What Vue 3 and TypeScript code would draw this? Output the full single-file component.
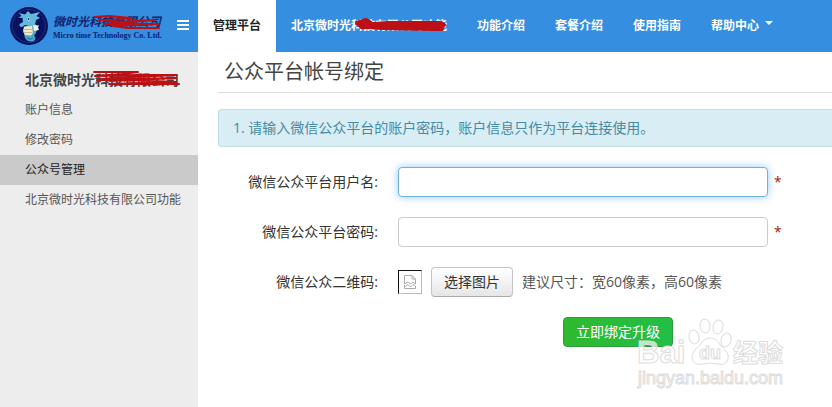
<script setup lang="ts">
import { ref } from 'vue'

interface NavItem {
  label: string
  active?: boolean
  struck?: boolean
  menu?: boolean
}

const navItems: NavItem[] = [
  { label: '管理平台', active: true },
  { label: '北京微时光科技有限公司功能', struck: true },
  { label: '功能介绍' },
  { label: '套餐介绍' },
  { label: '使用指南' },
  { label: '帮助中心', menu: true },
]

const sideItems: NavItem[] = [
  { label: '账户信息' },
  { label: '修改密码' },
  { label: '公众号管理', active: true },
  { label: '北京微时光科技有限公司功能' },
]

const username = ref('')
const password = ref('')
</script>

<template>
  <div class="page">
    <header class="topbar">
      <div class="brand">
        <svg class="emblem" viewBox="0 0 40 40" aria-hidden="true">
          <circle cx="20" cy="20" r="19" fill="#08125e" />
          <circle cx="20" cy="20" r="16.5" fill="none" stroke="#28458f" stroke-width="0.6" />
          <path d="M17 20 Q14 27 16 32 Q19 37 25 35 Q28 32 25 30 Q30 24 26 17Z" fill="#4aa5cf" />
          <path d="M10 7 L16 8.500 L19 5 L22 8 L31 6 L27.500 10 L31 12 L27 14 Q27 19 22 20 L16 19 L13 21 Q10 21 10.500 18 L14 16 L13.500 12 L9 11.500 L12.500 10Z" fill="#62b9dc" />
          <path d="M15 20.500 L23 20 L24 27 L22 29.500 L16 29 L14 25Z" fill="#eee9c9" />
          <path d="M14.500 23.500H23.500M14.500 26.500H23.500" stroke="#b5af91" stroke-width="0.8" />
          <path d="M24 19 L30 19.500 L29 21.500 L30 24 L25 25Z" fill="#f3f5ec" />
          <path d="M18 32 Q21 34.500 24 32" fill="none" stroke="#246d9a" />
          <circle cx="19.500" cy="13" r="1.500" fill="#fff" />
          <circle cx="19.500" cy="13" r="1" fill="#162453" />
        </svg>
        <div class="brand-text">
          <span class="brand-cn">微时光科技有限公司
            <svg class="scribble scribble-brand" viewBox="0 0 68 18" aria-hidden="true">
              <path d="M2 3 L16 2 L38 4 L20 6 L6 6 L24 8 L62 6 L26 9 L12 10 L66 10 L20 12 L34 14 L66 14" />
            </svg>
          </span>
          <span class="brand-en">Micro time Technology Co. Ltd.</span>
        </div>
        <button class="toggle" type="button" aria-label="菜单">
          <span></span><span></span><span></span>
        </button>
      </div>
      <nav class="nav">
        <a v-for="item in navItems" :key="item.label" href="#" :class="{ active: item.active }">
          {{ item.label }}
          <i v-if="item.menu" class="caret"></i>
          <svg v-if="item.struck" class="scribble scribble-nav" viewBox="0 0 94 18" aria-hidden="true">
            <path d="M4 7 L13 4 L18 7 L6 9 L35 7 L88 7 L91 9 L15 9 L8 11 L75 10 L90 10 L80 13 L30 12 L15 11 L89 13" />
          </svg>
        </a>
      </nav>
    </header>

    <div class="body">
      <aside class="sidebar">
        <h2>北京微时光科技有限公司
          <svg class="scribble scribble-side" viewBox="0 0 90 18" aria-hidden="true">
            <path d="M2 2 H46 L30 4 L3 6 L46 5 L84 5 L20 8 L5 10 L84 8 L18 11 L40 10 L84 12 L17 14 L87 14" />
          </svg>
        </h2>
        <a v-for="item in sideItems" :key="item.label" href="#" :class="{ active: item.active }">{{ item.label }}</a>
      </aside>

      <main class="content">
        <h1>公众平台帐号绑定</h1>
        <p class="notice">1. 请输入微信公众平台的账户密码，账户信息只作为平台连接使用。</p>
        <form class="form" @submit.prevent>
          <div class="row">
            <label for="username">微信公众平台用户名:</label>
            <input id="username" v-model="username" class="current" type="text" autocomplete="off" />
            <span class="required">*</span>
          </div>
          <div class="row">
            <label for="password">微信公众平台密码:</label>
            <input id="password" v-model="password" type="password" autocomplete="off" />
            <span class="required">*</span>
          </div>
          <div class="row">
            <label for="choose">微信公众二维码:</label>
            <span class="preview">
              <svg viewBox="0 0 14 16" aria-hidden="true">
                <path d="M1.500 8 V1.500 H9 L12.500 5 V10 L10 8 L7.500 10 L5 8 L1.500 10Z M9 1.500 V5 H12.500 M1.500 11 V14.500 H12.500 V12 L10 10.500 L7.500 13 L5 10.500 L2.500 12.500" fill="none" stroke="#aaa" />
              </svg>
            </span>
            <button id="choose" class="choose" type="button">选择图片</button>
            <span class="hint">建议尺寸：宽60像素，高60像素</span>
          </div>
          <button class="submit" type="submit">立即绑定升级</button>
        </form>
      </main>
    </div>

    <svg class="watermark" viewBox="0 0 156 84" aria-hidden="true">
      <g fill="#fff" fill-opacity="0.7" stroke="#dcdcdc" stroke-width="1">
        <text x="2" y="46" class="wm-latin">Bai</text>
        <ellipse cx="59" cy="20" rx="5" ry="7" transform="rotate(-12 59 20)" />
        <ellipse cx="70" cy="9" rx="5" ry="7" transform="rotate(-6 70 9)" />
        <ellipse cx="83" cy="10" rx="5" ry="7" transform="rotate(12 83 10)" />
        <ellipse cx="91" cy="23" rx="5" ry="7" transform="rotate(16 91 23)" />
        <path d="M75 21 Q82 21 85 28 Q95 36 93 42 Q91 49 83 47 Q75 45 69 47 Q59 49 57 42 Q56 35 65 28 Q69 21 75 21Z" />
        <text x="64" y="42" class="wm-du">du</text>
        <text x="98" y="45" class="wm-cn">经验</text>
        <text x="3" y="67" class="wm-url">jingyan.baidu.com</text>
      </g>
    </svg>
  </div>
</template>

<style>
body {
  margin: 0;
}
</style>

<style scoped>
.page {
  position: relative;
  display: flex;
  flex-direction: column;
  min-height: 100vh;
  overflow: hidden;
  background: #fff;
  color: #333;
  font-family: "Open Sans", "Noto Sans CJK SC", sans-serif;
  font-size: 14px;
  line-height: 20px;
}
.page * {
  box-sizing: border-box;
}
a {
  color: inherit;
  text-decoration: none;
}
.topbar {
  display: flex;
  height: 52px;
  background: #358edf;
}
.brand {
  display: flex;
  flex: none;
  align-items: center;
  width: 198px;
  padding: 0 9px;
}
.emblem {
  flex: none;
  width: 40px;
  height: 40px;
}
.brand-text {
  display: flex;
  flex: 1;
  flex-direction: column;
  align-items: flex-start;
  padding: 4px 0 0 4px;
  color: #10226f;
  white-space: nowrap;
}
.brand-cn {
  position: relative;
  font-size: 12px;
  font-style: italic;
  font-weight: 700;
  line-height: 16px;
}
.brand-en {
  font-family: "Liberation Serif", serif;
  font-size: 8px;
  font-weight: 700;
  line-height: 12px;
}
.toggle {
  display: flex;
  flex: none;
  flex-direction: column;
  gap: 2px;
  padding: 0 0 3px;
  border: 0;
  background: none;
}
.toggle span {
  width: 12px;
  height: 2px;
  background: #fff;
}
.nav {
  display: flex;
  white-space: nowrap;
}
.nav a {
  position: relative;
  display: flex;
  align-items: center;
  padding: 0 15px;
  color: #fff;
  font-size: 12px;
  font-weight: 700;
}
.nav a.active {
  background: #fff;
  color: #222;
}
.caret {
  margin: 0 0 6px 6px;
  border-top: 4px solid #fff;
  border-right: 4px solid transparent;
  border-left: 4px solid transparent;
}
.scribble {
  position: absolute;
  height: 18px;
  fill: none;
  stroke: #bd1014;
  stroke-width: 2;
  stroke-linejoin: round;
  stroke-linecap: round;
}
.scribble-brand {
  top: 0;
  right: 0;
  width: 68px;
}
.scribble-nav {
  top: 16px;
  right: 15px;
  width: 94px;
  stroke-width: 4;
}
.scribble-side {
  top: 5px;
  right: 16px;
  width: 90px;
}
.body {
  display: flex;
  flex: 1;
}
.sidebar {
  flex: none;
  width: 198px;
  padding-top: 13px;
  background: #ededed;
}
.sidebar h2 {
  position: relative;
  margin: 0;
  padding-left: 25px;
  color: #444;
  font-size: 14px;
  font-weight: 700;
  line-height: 30px;
}
.sidebar a {
  display: block;
  padding-left: 25px;
  color: #555;
  font-size: 12px;
  line-height: 30px;
}
.sidebar a.active {
  background: #cacaca;
  color: #222;
}
.content {
  flex: 1;
  min-width: 0;
  padding-left: 20px;
}
h1 {
  margin: 0 0 16px;
  padding: 0 6px;
  border-bottom: 1px solid #ddd;
  color: #444;
  font-size: 20px;
  font-weight: 400;
  line-height: 40px;
}
.notice {
  margin: 0 0 20px;
  padding: 8px 14px;
  border: 1px solid #bcdfe8;
  border-right: 0;
  border-radius: 4px 0 0 4px;
  background: #d9edf5;
  color: #468ba3;
}
.form {
  display: flex;
  flex-direction: column;
  align-items: flex-start;
  gap: 20px;
}
.row {
  display: flex;
  align-items: center;
  height: 30px;
}
.row label {
  width: 160px;
  margin-right: 20px;
  text-align: right;
}
.row input {
  width: 370px;
  height: 30px;
  padding: 4px 6px;
  border: 1px solid #ccc;
  border-radius: 4px;
  background: #fff;
  font: inherit;
  outline: none;
}
.row input.current,
.row input:focus {
  border-color: #71b0db;
  box-shadow: 0 0 8px rgba(82, 168, 236, 0.6);
}
.required {
  margin-left: 6px;
  color: #a11;
}
.preview {
  display: flex;
  align-items: center;
  justify-content: center;
  width: 24px;
  height: 24px;
  border: 1px solid;
  border-color: #111 #bbb #bbb #111;
}
.preview svg {
  width: 14px;
  height: 16px;
}
.choose,
.submit {
  height: 30px;
  padding: 0 12px;
  border-radius: 4px;
  font: inherit;
}
.choose {
  margin: 0 9px;
  border: 1px solid #c5c5c5;
  border-bottom-color: #aaa;
  background: linear-gradient(#fff, #e6e6e6);
  color: #333;
}
.hint {
  color: #555;
}
.submit {
  margin-left: 345px;
  border: 1px solid #2a9c3c;
  background: linear-gradient(90deg, #2fb92f, #22bf48);
  color: #fff;
}
.watermark {
  position: absolute;
  right: 41px;
  bottom: 6px;
  width: 156px;
  height: 84px;
  pointer-events: none;
}
.wm-latin,
.wm-du,
.wm-cn {
  font-family: "Liberation Sans", "Noto Sans CJK SC", sans-serif;
  font-weight: 700;
}
.wm-latin {
  font-size: 31px;
}
.wm-du {
  font-size: 18px;
}
.wm-cn {
  font-size: 25px;
}
.wm-url {
  font-family: "Liberation Sans", sans-serif;
  font-size: 18px;
}
</style>
